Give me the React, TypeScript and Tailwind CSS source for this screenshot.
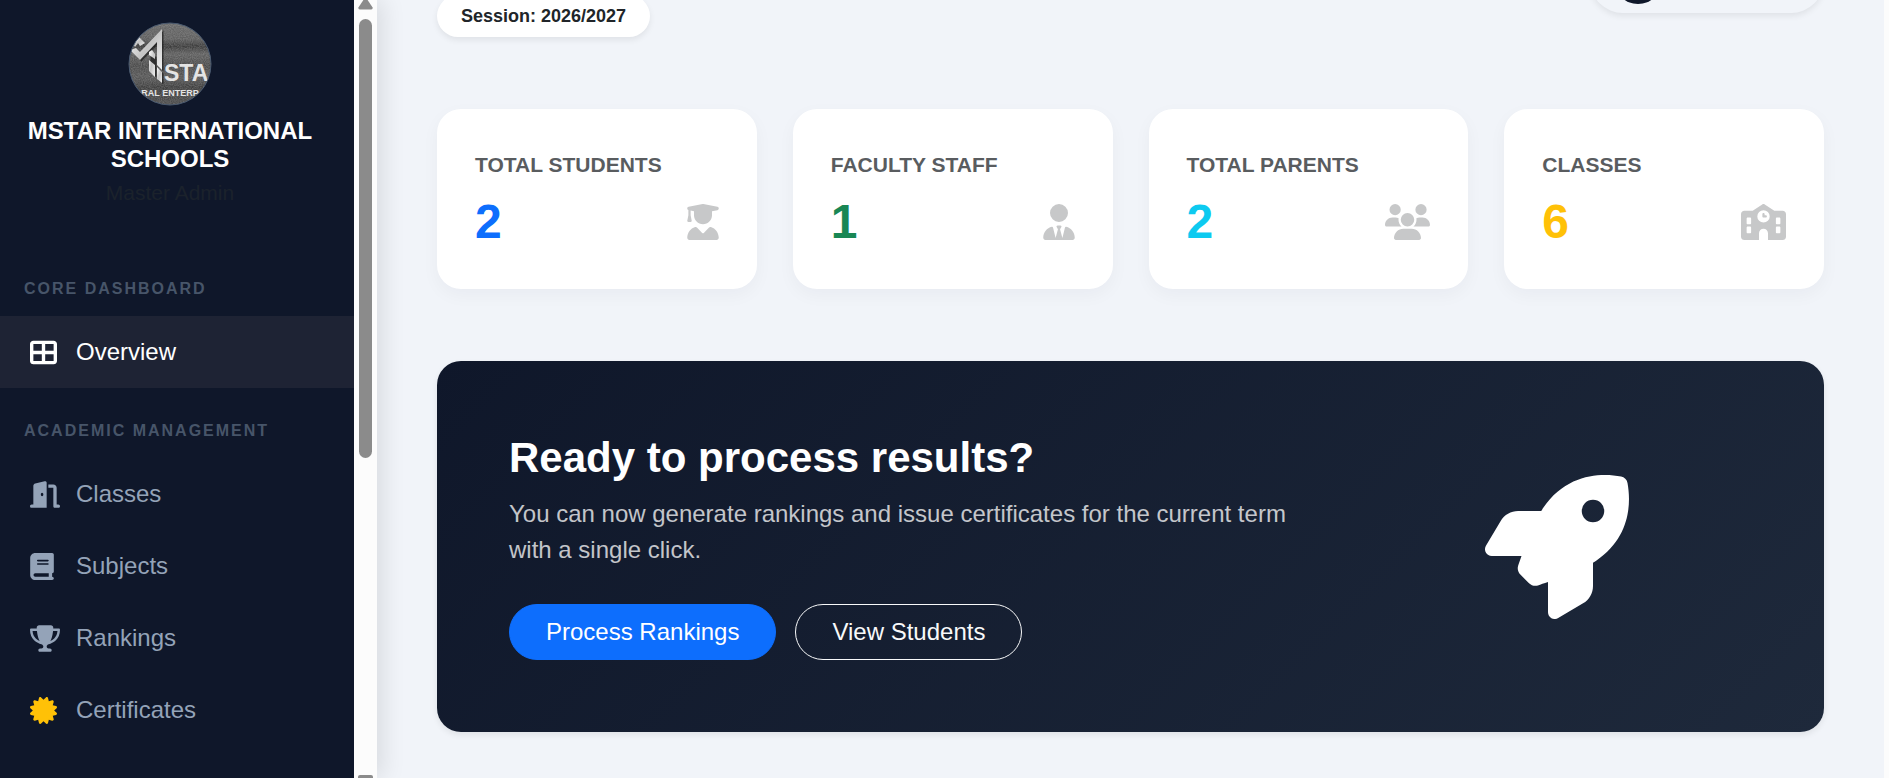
import type { IconType } from "react-icons";
import {
  FaBook,
  FaCertificate,
  FaDoorOpen,
  FaRocket,
  FaSchool,
  FaTableCellsLarge,
  FaTrophy,
  FaUserGraduate,
  FaUserTie,
  FaUsers,
} from "react-icons/fa6";

type NavItem = { label: string; icon: IconType; iconClass: string; active?: boolean };

const navGroups: { title: string; items: NavItem[] }[] = [
  {
    title: "CORE DASHBOARD",
    items: [{ label: "Overview", icon: FaTableCellsLarge, iconClass: "w-[27px]", active: true }],
  },
  {
    title: "ACADEMIC MANAGEMENT",
    items: [
      { label: "Classes", icon: FaDoorOpen, iconClass: "w-[30px]" },
      { label: "Subjects", icon: FaBook, iconClass: "w-6" },
      { label: "Rankings", icon: FaTrophy, iconClass: "w-[30px]" },
      { label: "Certificates", icon: FaCertificate, iconClass: "w-[27px] text-[#ffc107]" },
    ],
  },
];

const stats: { label: string; value: number; icon: IconType; iconClass: string; color: string }[] = [
  { label: "TOTAL STUDENTS", value: 2, icon: FaUserGraduate, iconClass: "w-8", color: "text-[#0d6efd]" },
  { label: "FACULTY STAFF", value: 1, icon: FaUserTie, iconClass: "w-8", color: "text-[#198754]" },
  { label: "TOTAL PARENTS", value: 2, icon: FaUsers, iconClass: "w-[45px]", color: "text-[#0dcaf0]" },
  { label: "CLASSES", value: 6, icon: FaSchool, iconClass: "w-[45px]", color: "text-[#ffc107]" },
];

function SchoolLogo() {
  return (
    <svg viewBox="0 0 84 84" className="size-[84px]" role="img" aria-label="School logo">
      <defs>
        <clipPath id="logo-clip">
          <circle cx="42" cy="42" r="41" />
        </clipPath>
        <linearGradient id="logo-bg" x1="0" y1="0" x2="0" y2="1">
          <stop offset="0" stopColor="#6a6a6a" />
          <stop offset="0.2" stopColor="#606060" />
          <stop offset="0.29" stopColor="#3c3c3c" />
          <stop offset="0.38" stopColor="#626262" />
          <stop offset="0.52" stopColor="#4c4c4c" />
          <stop offset="0.66" stopColor="#595959" />
          <stop offset="0.78" stopColor="#404040" />
          <stop offset="1" stopColor="#4e4e4e" />
        </linearGradient>
        <linearGradient id="logo-metal" x1="0" y1="0" x2="1" y2="1">
          <stop offset="0" stopColor="#ffffff" />
          <stop offset="0.5" stopColor="#c4c4c4" />
          <stop offset="1" stopColor="#f2f2f2" />
        </linearGradient>
        <filter id="logo-grain">
          <feTurbulence type="fractalNoise" baseFrequency="0.9" numOctaves="2" />
          <feColorMatrix values="0 0 0 0 0.5  0 0 0 0 0.5  0 0 0 0 0.5  0.9 0 0 0 -0.25" />
        </filter>
      </defs>
      <g clipPath="url(#logo-clip)">
        <rect width="84" height="84" fill="url(#logo-bg)" />
        <rect width="84" height="84" filter="url(#logo-grain)" opacity="0.6" />
        <g fill="#1c1c1c" opacity="0.7" transform="translate(1.5 1.5)">
          <path d="M2 28 L12 38 L29 20 V43 L34 48 V7 L12 30 L8 26 Z" />
          <path d="M21 28 L27 34 V54 L21 48 Z M29 45 L34 50 V61 L29 57 Z" />
        </g>
        <g fill="url(#logo-metal)">
          <path d="M2 28 L12 38 L29 20 V43 L34 48 V7 L12 30 L8 26 Z" />
          <path d="M5 22 L11 15 L17 21 L12 24 L10 21 L7 25 Z" />
          <path d="M21 30 L24 28 L27 32 V37 L21 33 Z M21 38 L27 43 V55 L21 49 Z" />
          <path d="M29 45 L34 50 V61 L29 57 Z" />
        </g>
        <g fontFamily="'Liberation Sans', sans-serif" fontWeight="700" fill="#e4e4e4">
          <text x="36" y="59" fontSize="23">
            STA
          </text>
          <text x="42" y="74" textAnchor="middle" fontSize="9">
            RAL ENTERP
          </text>
        </g>
      </g>
      <circle cx="42" cy="42" r="41" fill="none" stroke="#4a5a70" strokeWidth="1" />
    </svg>
  );
}

function SidebarScrollbar() {
  return (
    <div aria-hidden="true" className="flex w-[23px] shrink-0 flex-col items-center bg-[#fcfcfc]">
      <svg viewBox="0 0 15 10" className="h-[10px] w-[15px] shrink-0" fill="#8b8b8b">
        <path d="M5.4 0 H9.6 L14.6 7.5 Q15 9.5 13.2 9.5 H1.8 Q0 9.5 0.4 7.5 Z" />
      </svg>
      <div className="mt-[9px] h-[439px] w-[13px] shrink-0 rounded-full bg-[#8b8b8b]" />
      <div className="mt-auto h-[3px] w-[15px] shrink-0 rounded-t-[2px] bg-[#8b8b8b]" />
    </div>
  );
}

function Sidebar() {
  return (
    <aside className="z-10 flex w-[377px] shrink-0 shadow-[6px_0_22px_rgba(0,0,0,0.1)]">
      <div className="min-w-0 flex-1 overflow-hidden bg-[#0f172a]">
        <div className="flex h-[246px] flex-col items-center pt-[22px] pr-9 pl-[22px] text-center">
          <SchoolLogo />
          <h1 className="mt-[11px] text-[24px] leading-[28px] font-bold text-white">
            MSTAR INTERNATIONAL SCHOOLS
          </h1>
          <p className="mt-1 text-[21px] leading-[32px] text-[#1b222c]">Master Admin</p>
        </div>
        <nav>
          {navGroups.map((group) => (
            <section key={group.title}>
              <h2 className="flex h-[70px] items-center px-6 pt-4 text-[16px] font-bold tracking-[2px] text-[#475569]">
                {group.title}
              </h2>
              <ul>
                {group.items.map(({ label, icon: Icon, active, iconClass }) => (
                  <li key={label}>
                    <a
                      href="#"
                      className={
                        active
                          ? "flex h-[72px] items-center bg-[#1e2334] pl-[30px] text-[24px] text-white"
                          : "flex h-[72px] items-center pl-[30px] text-[24px] text-[#94a3b8]"
                      }
                    >
                      <span className="w-[46px]">
                        <Icon className={`h-[27px] ${iconClass}`} />
                      </span>
                      {label}
                    </a>
                  </li>
                ))}
              </ul>
            </section>
          ))}
        </nav>
      </div>
      <SidebarScrollbar />
    </aside>
  );
}

export default function App() {
  return (
    <div className="flex h-screen overflow-hidden bg-[#f1f4f9] font-['Liberation_Sans',Arial,sans-serif] text-[#212529]">
      <Sidebar />

      <main className="-mt-[53px] min-w-0 flex-1 px-[60px]">
        <header className="flex items-start justify-between">
          <div className="pt-12">
            <span className="block rounded-full bg-white px-6 py-3 text-[18px] leading-[18px] font-bold shadow-[0_3px_6px_rgba(0,0,0,0.075)]">
              Session: 2026/2027
            </span>
          </div>
          <div className="flex h-[66px] w-[234px] items-center rounded-full px-6 shadow-[0_3px_6px_rgba(0,0,0,0.075)]">
            <span className="size-12 rounded-full bg-[#0f172a]" />
          </div>
        </header>

        <section className="mt-[72px] grid grid-cols-4 gap-9">
          {stats.map(({ label, value, icon: Icon, iconClass, color }) => (
            <article
              key={label}
              className="h-[180px] rounded-[24px] bg-white px-[38px] pt-10 shadow-[0_6px_18px_rgba(15,23,42,0.04)]"
            >
              <h2 className="text-[21px] leading-[32px] font-bold text-[#595c5f]">{label}</h2>
              <div className="mt-3 flex items-center justify-between">
                <span className={`text-[48px] leading-[58px] font-bold ${color}`}>{value}</span>
                <Icon className={`h-9 text-[#c7c8c9] ${iconClass}`} />
              </div>
            </article>
          ))}
        </section>

        <section className="mt-[72px] rounded-[24px] bg-linear-135 from-[#0f172a] to-[#1e293b] p-[72px] text-white shadow-[0_3px_6px_rgba(0,0,0,0.075)]">
          <div className="-mx-[18px] flex items-center">
            <div className="w-2/3 px-[18px]">
              <h2 className="text-[42px] leading-[49px] font-bold">Ready to process results?</h2>
              <p className="mt-[14px] text-[24px] leading-[36px] text-white/75">
                You can now generate rankings and issue certificates for the current term with a
                single click.
              </p>
              <div className="mt-9 flex gap-[19px]">
                <button
                  type="button"
                  className="h-14 rounded-full border border-[#0d6efd] bg-[#0d6efd] px-9 text-[24px]"
                >
                  Process Rankings
                </button>
                <button
                  type="button"
                  className="h-14 rounded-full border border-[#f8f9fa] px-9 text-[24px] text-[#f8f9fa]"
                >
                  View Students
                </button>
              </div>
            </div>
            <div className="flex w-1/3 justify-center px-[18px]">
              <FaRocket className="size-36" />
            </div>
          </div>
        </section>
      </main>

      <div aria-hidden="true" className="w-[5px] shrink-0 bg-[#fcfcfc]" />
    </div>
  );
}
